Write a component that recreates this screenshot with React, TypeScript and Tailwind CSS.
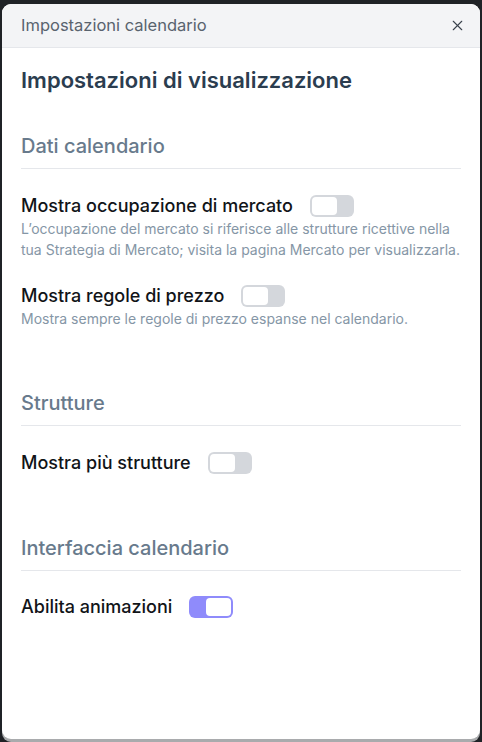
import { X } from "lucide-react";

// ── Toggle ─────────────────────────────────────────────────────────────────

function Toggle({ on = false }: { on?: boolean }) {
  return (
    <span
      className={
        on
          ? "flex h-[22px] w-[44px] shrink-0 items-center justify-end rounded-[6px] bg-[#8f8bfb] p-[2px]"
          : "flex h-[22px] w-[44px] shrink-0 items-center justify-start rounded-[6px] bg-[#d4d7dc] p-[2px]"
      }
    >
      <span className="h-[18px] w-[25px] rounded-[4px] bg-white" />
    </span>
  );
}

function Setting({
  label,
  desc,
  on,
}: {
  label: string;
  desc?: string;
  on?: boolean;
}) {
  return (
    <div>
      <div className="flex items-center gap-[17px]">
        <span className="text-[18px] leading-[24px] font-medium text-[#111418]">
          {label}
        </span>
        <Toggle on={on} />
      </div>
      {desc && (
        <p className="text-[14px] leading-[21px] text-[#8596a6]">{desc}</p>
      )}
    </div>
  );
}

function SectionTitle({ children }: { children: string }) {
  return (
    <div className="border-b border-[#e5e7eb] pb-[9px]">
      <h2 className="text-[20px] leading-[26px] font-medium text-[#687a8c]">
        {children}
      </h2>
    </div>
  );
}

// ── Page ───────────────────────────────────────────────────────────────────

export default function App() {
  return (
    <div
      className="h-[742px] bg-[#1f2226] pt-[4px] pr-[2px] pl-[2px]"
      style={{ fontFamily: "Inter, 'Noto Sans', sans-serif" }}
    >
      <div className="h-[735px] overflow-hidden rounded-[9px] bg-white shadow-[0_3px_0_#a9abad]">
        <div className="flex h-[44px] items-center justify-between border-b border-[#e5e7eb] bg-[#f3f4f6] pr-[14px] pl-[19px]">
          <span className="text-[16.5px] text-[#59636e]">
            Impostazioni calendario
          </span>
          <X size={17} strokeWidth={1.6} className="text-[#3a434d]" />
        </div>

        <div className="px-[19px] pt-[18px]">
          <h1 className="text-[22px] leading-[28px] font-semibold text-[#2b3d4f]">
            Impostazioni di visualizzazione
          </h1>

          <div className="mt-[39px]">
            <SectionTitle>Dati calendario</SectionTitle>
            <div className="mt-[25px] flex flex-col gap-[24px]">
              <Setting
                label="Mostra occupazione di mercato"
                desc="L’occupazione del mercato si riferisce alle strutture ricettive nella tua Strategia di Mercato; visita la pagina Mercato per visualizzarla."
              />
              <Setting
                label="Mostra regole di prezzo"
                desc="Mostra sempre le regole di prezzo espanse nel calendario."
              />
            </div>
          </div>

          <div className="mt-[61px]">
            <SectionTitle>Strutture</SectionTitle>
            <div className="mt-[25px]">
              <Setting label="Mostra più strutture" />
            </div>
          </div>

          <div className="mt-[60px]">
            <SectionTitle>Interfaccia calendario</SectionTitle>
            <div className="mt-[24px]">
              <Setting label="Abilita animazioni" on />
            </div>
          </div>
        </div>
      </div>
    </div>
  );
}
